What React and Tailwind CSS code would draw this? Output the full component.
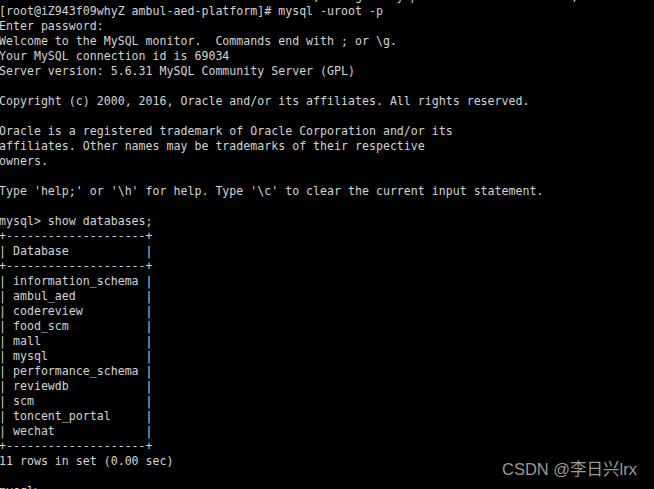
import React from 'react';

const prevLine =
  '                                             ,     g     y p                      ,   ';

const lines = [
  '[root@iZ943f09whyZ ambul-aed-platform]# mysql -uroot -p',
  'Enter password:',
  'Welcome to the MySQL monitor.  Commands end with ; or \\g.',
  'Your MySQL connection id is 69034',
  'Server version: 5.6.31 MySQL Community Server (GPL)',
  '',
  'Copyright (c) 2000, 2016, Oracle and/or its affiliates. All rights reserved.',
  '',
  'Oracle is a registered trademark of Oracle Corporation and/or its',
  'affiliates. Other names may be trademarks of their respective',
  'owners.',
  '',
  "Type 'help;' or '\\h' for help. Type '\\c' to clear the current input statement.",
  '',
  'mysql> show databases;',
];

const dbs = [
  'information_schema',
  'ambul_aed',
  'codereview',
  'food_scm',
  'mall',
  'mysql',
  'performance_schema',
  'reviewdb',
  'scm',
  'toncent_portal',
  'wechat',
];

const border = '+--------------------+';
const row = (name) => '| ' + name.padEnd(19, ' ') + '|';

const tail = [
  border,
  row('Database'),
  border,
  ...dbs.map(row),
  border,
  '11 rows in set (0.00 sec)',
  '',
  'mysql> ',
];

export default function App() {
  const all = [prevLine, ...lines, ...tail];
  return (
    <div className="relative w-[654px] h-[489px] overflow-hidden bg-black">
      <div className="-mt-[11px] -ml-[1px] text-[11.6px] leading-[15px] text-[#d4d4d4] font-['DejaVu_Sans_Mono',monospace] whitespace-pre">
        {all.map((l, i) => (
          <div key={i} className="h-[15px]">
            {l}
          </div>
        ))}
      </div>
      <div className="absolute right-[17px] bottom-[10px] text-[16.5px] leading-[20px] text-[#9a9a9a] font-['Liberation_Sans','Noto_Sans_CJK_SC',sans-serif]">
        CSDN @李日兴lrx
      </div>
    </div>
  );
}
